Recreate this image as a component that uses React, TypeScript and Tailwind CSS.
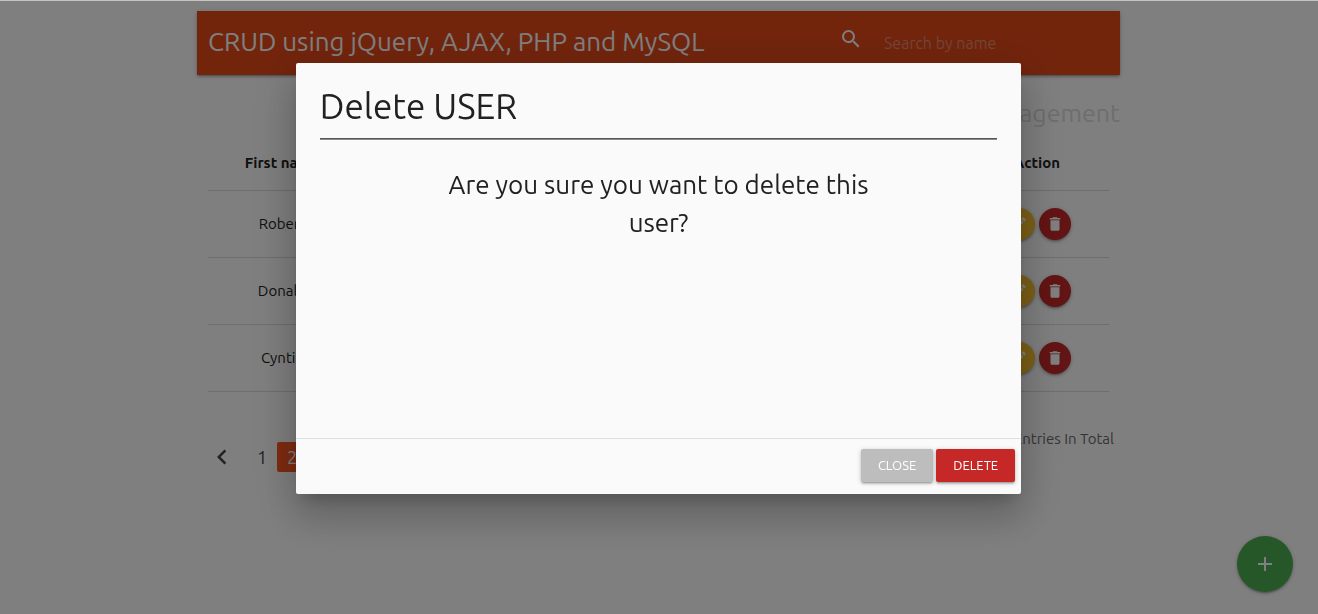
import { MdAdd, MdChevronLeft, MdDelete, MdEdit, MdSearch } from "react-icons/md";

const users = ["Robert", "Donald", "Cyntia"];

const raised = "shadow-[0_2px_2px_0_rgba(0,0,0,0.14),0_3px_1px_-2px_rgba(0,0,0,0.12),0_1px_5px_0_rgba(0,0,0,0.2)]";

function Header() {
  return (
    <header className={`flex h-16 items-center bg-[#e64a19] pl-[11px] text-white ${raised}`}>
      <h1 className="flex-1 whitespace-nowrap pb-[2px] text-[26px] leading-8">CRUD using jQuery, AJAX, PHP and MySQL</h1>
      <label className="flex w-[281px] items-center gap-[21px]">
        <MdSearch aria-hidden="true" className="mb-2 size-6 shrink-0" />
        <input
          type="search"
          aria-label="Search by name"
          placeholder="Search by name"
          className="w-full min-w-0 bg-transparent text-base outline-none placeholder:text-[#e68c74]"
        />
      </label>
    </header>
  );
}

function UserTable() {
  return (
    <table className="w-full table-fixed border-collapse text-center text-[15px] leading-5 text-[#212121]">
      <thead>
        <tr className="h-[53px] border-b border-[#dcdcdc]">
          <th className="w-[148px] font-bold">First name</th>
          <td />
          <th className="w-[144px] font-bold">Action</th>
        </tr>
      </thead>
      <tbody>
        {users.map((name) => (
          <tr key={name} className="h-[67px] border-b border-[#dcdcdc]">
            <td>{name}</td>
            <td />
            <td>
              <div className="flex justify-center gap-1 text-white">
                <button aria-label={`Edit ${name}`} className={`flex size-8 items-center justify-center rounded-full bg-[#fbc02d] ${raised}`}>
                  <MdEdit className="size-[18px]" />
                </button>
                <button aria-label={`Delete ${name}`} className={`flex size-8 items-center justify-center rounded-full bg-[#c62828] ${raised}`}>
                  <MdDelete className="size-[18px]" />
                </button>
              </div>
            </td>
          </tr>
        ))}
      </tbody>
    </table>
  );
}

function Pagination() {
  return (
    <div className="mt-9 flex items-start justify-between pr-[6px] pl-[11px]">
      <nav aria-label="Pages" className="mt-[14px] flex text-[18px] leading-[30px] text-[#444444]">
        <button aria-label="Previous page" className="mr-[11px] flex h-[30px] w-7 items-center justify-center">
          <MdChevronLeft className="size-[30px] shrink-0" />
        </button>
        <a href="#1" className="w-[30px] text-center">1</a>
        <a href="#2" aria-current="page" className="w-[30px] rounded-xs bg-[#ff5722] text-center text-white">2</a>
      </nav>
      <p className="text-[15px] leading-[22px] text-[#6b6b6b]">Entries In Total</p>
    </div>
  );
}

function DeleteDialog() {
  return (
    <div className="fixed inset-x-0 top-px bottom-0 z-20 flex items-start justify-center bg-black/50 pt-[62px] pr-px">
      <section
        role="dialog"
        aria-modal="true"
        aria-labelledby="dialog-title"
        className="w-[calc(55%+1px)] rounded-xs bg-[#fafafa] text-[#212121] shadow-[0_24px_38px_3px_rgba(0,0,0,0.14),0_9px_46px_8px_rgba(0,0,0,0.12),0_11px_15px_-7px_rgba(0,0,0,0.2)]"
      >
        <div className="min-h-[375px] p-6">
          <h2 id="dialog-title" className="text-[35px] leading-[38px]">Delete USER</h2>
          <hr className="mt-[13px] h-[2px] border-t border-b border-t-[#555555] border-b-[#8a8a8a]" />
          <p className="mx-auto mt-[26px] max-w-[450px] text-center text-[26px] leading-[38px]">
            Are you sure you want to delete this user?
          </p>
        </div>
        <footer className="flex h-14 items-start justify-end gap-[3px] border-t border-[#e0e0e0] px-[6px] pt-[10px] text-[13px] leading-[33px] text-white">
          <button className={`rounded-xs bg-[#bdbdbd] px-[17px] ${raised}`}>CLOSE</button>
          <button className={`rounded-xs bg-[#c62828] px-[17px] ${raised}`}>DELETE</button>
        </footer>
      </section>
    </div>
  );
}

export default function App() {
  return (
    <div className="min-h-screen border-t border-[#c6c6c0] bg-white pr-px font-['Ubuntu','Noto_Sans',sans-serif]">
      <main className="mx-auto w-[calc(70%+1px)] pt-[10px]">
        <Header />
        <h2 className="mt-5 text-right text-[25px] leading-9 text-[#dcdcdc]">User Management</h2>
        <div className="mt-[6px] px-[11px]">
          <UserTable />
        </div>
        <Pagination />
      </main>
      <button aria-label="Add user" className={`fixed right-[25px] bottom-[22px] z-10 flex size-14 items-center justify-center rounded-full bg-[#4caf50] text-white ${raised}`}>
        <MdAdd className="size-6" />
      </button>
      <DeleteDialog />
    </div>
  );
}
